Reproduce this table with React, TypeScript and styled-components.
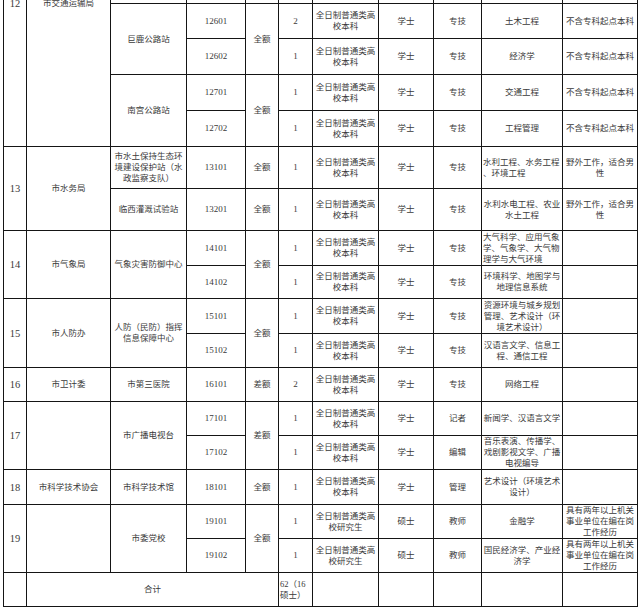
import React, { FC, ReactNode } from 'react'
import styled, { createGlobalStyle } from 'styled-components'

const GlobalStyle = createGlobalStyle`
  html, body {
    margin: 0;
    padding: 0;
    background: #fff;
  }
`

const widths = [23, 84, 76, 59, 33, 34, 66, 55, 48, 81, 75]

const UNDERGRAD = '全日制普通类高\n校本科'
const GRAD = '全日制普通类高\n校研究生'
const NO_JUNIOR = '不含专科起点本科'
const FIELD = '野外工作，适合男\n性'
const CADRE = '具有两年以上机关\n事业单位在编在岗\n工作经历'

interface TailProps {
  count: string
  edu?: string
  degree?: string
  kind?: string
  major: string
  majorAlign?: 'left' | 'center'
  note?: string
}

const Tail: FC<TailProps> = ({ count, edu = UNDERGRAD, degree = '学士', kind = '专技', major, majorAlign, note = '' }) => (
  <>
    <Cell $size={9}>{count}</Cell>
    <Cell>{edu}</Cell>
    <Cell>{degree}</Cell>
    <Cell>{kind}</Cell>
    <Cell $align={majorAlign}>{major}</Cell>
    <Cell>{note}</Cell>
  </>
)

const Code: FC<{ children: ReactNode }> = ({ children }) => <Cell $size={9}>{children}</Cell>

const Seq: FC<{ span?: number; children: ReactNode }> = ({ span, children }) => (
  <Cell rowSpan={span} $size={10.5}>
    {children}
  </Cell>
)

const App: FC = () => {
  return (
    <Frame>
      <GlobalStyle />
      <Sheet>
        <colgroup>
          {widths.map((w, i) => (
            <Col key={i} $w={w} />
          ))}
        </colgroup>
        <tbody>
          <Row $h={143}>
            <Seq span={5}>12</Seq>
            <Cell rowSpan={5}>市交通运输局</Cell>
            <Cell />
            <Cell />
            <Cell />
            <Cell />
            <Cell />
            <Cell />
            <Cell />
            <Cell />
            <Cell />
          </Row>
          <Row $h={35}>
            <Cell rowSpan={2}>巨鹿公路站</Cell>
            <Code>12601</Code>
            <Cell rowSpan={2}>全额</Cell>
            <Tail count="2" major="土木工程" note={NO_JUNIOR} />
          </Row>
          <Row $h={36}>
            <Code>12602</Code>
            <Tail count="1" major="经济学" note={NO_JUNIOR} />
          </Row>
          <Row $h={36}>
            <Cell rowSpan={2}>南宫公路站</Cell>
            <Code>12701</Code>
            <Cell rowSpan={2}>全额</Cell>
            <Tail count="1" major="交通工程" note={NO_JUNIOR} />
          </Row>
          <Row $h={36}>
            <Code>12702</Code>
            <Tail count="1" major="工程管理" note={NO_JUNIOR} />
          </Row>

          <Row $h={42}>
            <Seq span={2}>13</Seq>
            <Cell rowSpan={2}>市水务局</Cell>
            <Cell>{'市水土保持生态环\n境建设保护站（水\n政监察支队）'}</Cell>
            <Code>13101</Code>
            <Cell>全额</Cell>
            <Tail count="1" major={'水利工程、水务工程\n、环境工程'} majorAlign="left" note={FIELD} />
          </Row>
          <Row $h={42}>
            <Cell>临西灌溉试验站</Cell>
            <Code>13201</Code>
            <Cell>全额</Cell>
            <Tail count="1" major={'水利水电工程、农业\n水土工程'} note={FIELD} />
          </Row>

          <Row $h={35}>
            <Seq span={2}>14</Seq>
            <Cell rowSpan={2}>市气象局</Cell>
            <Cell rowSpan={2}>气象灾害防御中心</Cell>
            <Code>14101</Code>
            <Cell rowSpan={2}>全额</Cell>
            <Tail count="1" major={'大气科学、应用气象\n学、气象学、大气物\n理学与大气环境'} majorAlign="left" />
          </Row>
          <Row $h={33}>
            <Code>14102</Code>
            <Tail count="1" major={'环境科学、地图学与\n地理信息系统'} />
          </Row>

          <Row $h={35}>
            <Seq span={2}>15</Seq>
            <Cell rowSpan={2}>市人防办</Cell>
            <Cell rowSpan={2}>{'人防（民防）指挥\n信息保障中心'}</Cell>
            <Code>15101</Code>
            <Cell rowSpan={2}>全额</Cell>
            <Tail count="1" major={'资源环境与城乡规划\n管理、艺术设计（环\n境艺术设计）'} />
          </Row>
          <Row $h={34}>
            <Code>15102</Code>
            <Tail count="1" major={'汉语言文学、信息工\n程、通信工程'} />
          </Row>

          <Row $h={34}>
            <Seq>16</Seq>
            <Cell>市卫计委</Cell>
            <Cell>市第三医院</Cell>
            <Code>16101</Code>
            <Cell>差额</Cell>
            <Tail count="2" major="网络工程" />
          </Row>

          <Row $h={34}>
            <Seq span={2}>17</Seq>
            <Cell rowSpan={2} />
            <Cell rowSpan={2}>市广播电视台</Cell>
            <Code>17101</Code>
            <Cell rowSpan={2}>差额</Cell>
            <Tail count="1" kind="记者" major="新闻学、汉语言文学" />
          </Row>
          <Row $h={33}>
            <Code>17102</Code>
            <Tail count="1" kind="编辑" major={'音乐表演、传播学、\n戏剧影视文学、广播\n电视编导'} />
          </Row>

          <Row $h={35}>
            <Seq>18</Seq>
            <Cell>市科学技术协会</Cell>
            <Cell>市科学技术馆</Cell>
            <Code>18101</Code>
            <Cell>全额</Cell>
            <Tail count="1" kind="管理" major={'艺术设计（环境艺术\n设计）'} />
          </Row>

          <Row $h={34}>
            <Seq span={2}>19</Seq>
            <Cell rowSpan={2} />
            <Cell rowSpan={2}>市委党校</Cell>
            <Code>19101</Code>
            <Cell rowSpan={2}>全额</Cell>
            <Tail count="1" edu={GRAD} degree="硕士" kind="教师" major="金融学" note={CADRE} />
          </Row>
          <Row $h={34}>
            <Code>19102</Code>
            <Tail count="1" edu={GRAD} degree="硕士" kind="教师" major={'国民经济学、产业经\n济学'} note={CADRE} />
          </Row>

          <Row $h={34}>
            <Cell />
            <Cell colSpan={4}>合计</Cell>
            <Cell $align="left">{'62（16\n硕士）'}</Cell>
            <Cell />
            <Cell />
            <Cell />
            <Cell />
            <Cell />
          </Row>
        </tbody>
      </Sheet>
    </Frame>
  )
}

export default App

const Frame = styled.div`
  width: 640px;
  height: 607px;
  overflow: hidden;
  padding-left: 3px;
  box-sizing: border-box;
`

const Sheet = styled.table`
  margin-top: -140px;
  width: 635px;
  table-layout: fixed;
  border-collapse: collapse;
  font-family: 'Liberation Serif', 'Noto Sans CJK SC', serif;
  line-height: 11px;
  color: #3a3a3a;
`

const Col = styled.col<{ $w: number }>`
  width: ${(p) => p.$w}px;
`

const Row = styled.tr<{ $h: number }>`
  height: ${(p) => p.$h}px;
`

const Cell = styled.td<{ $align?: 'left' | 'center'; $size?: number }>`
  border: 1px solid #151515;
  padding: 0 1px;
  text-align: ${(p) => p.$align ?? 'center'};
  vertical-align: middle;
  white-space: pre-line;
  font-size: ${(p) => p.$size ?? 8.5}px;
  overflow: hidden;
`
